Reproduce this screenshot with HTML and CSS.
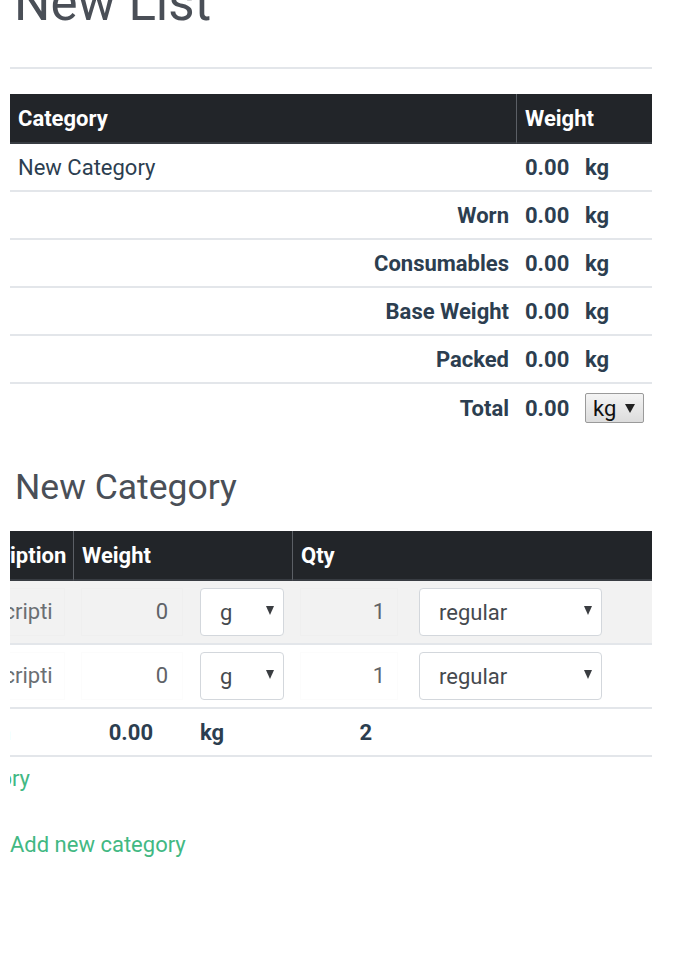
FILE: index.html
```html
<!DOCTYPE html>
<html>
<head>
<meta charset="utf-8">
<link rel="stylesheet" href="styles.css">
</head>
<body>
<div class="page">
  <h1 class="list-title">New List</h1>
  <div class="rule"></div>

  <table class="summary">
    <colgroup><col class="c-label"><col class="c-val"><col class="c-unit"></colgroup>
    <thead>
      <tr><th>Category</th><th class="sep">Weight</th><th class="blank"></th></tr>
    </thead>
    <tbody>
      <tr><td class="cat-name">New Category</td><td class="val">0.00</td><td class="unit">kg</td></tr>
      <tr><td class="label">Worn</td><td class="val">0.00</td><td class="unit">kg</td></tr>
      <tr><td class="label">Consumables</td><td class="val">0.00</td><td class="unit">kg</td></tr>
      <tr><td class="label">Base Weight</td><td class="val">0.00</td><td class="unit">kg</td></tr>
      <tr><td class="label">Packed</td><td class="val">0.00</td><td class="unit">kg</td></tr>
      <tr class="last"><td class="label">Total</td><td class="val">0.00</td><td class="unit"><span class="unit-select">kg<i class="caret-sm"></i></span></td></tr>
    </tbody>
  </table>

  <h2 class="cat-title">New Category</h2>

  <div class="scroller">
    <div class="scroll-inner">
      <table class="items">
        <colgroup>
          <col class="i-desc"><col class="i-w"><col class="i-unit"><col class="i-qty"><col class="i-type"><col class="i-act">
        </colgroup>
        <thead>
          <tr>
            <th>Description</th>
            <th class="sep" colspan="2">Weight</th>
            <th class="sep" colspan="3">Qty</th>
          </tr>
        </thead>
        <tbody>
          <tr class="alt">
            <td><span class="field desc"><span class="clip">Description</span></span></td>
            <td><span class="field num w">0</span></td>
            <td class="unit-cell"><span class="select small">g<i class="caret"></i></span></td>
            <td><span class="field num">1</span></td>
            <td class="type-cell"><span class="select wide">regular<i class="caret"></i></span></td>
            <td></td>
          </tr>
          <tr>
            <td><span class="field desc"><span class="clip">Description</span></span></td>
            <td><span class="field num w">0</span></td>
            <td class="unit-cell"><span class="select small">g<i class="caret"></i></span></td>
            <td><span class="field num">1</span></td>
            <td class="type-cell"><span class="select wide">regular<i class="caret"></i></span></td>
            <td></td>
          </tr>
          <tr class="foot">
            <td><div class="clip-end"><a class="link">Add new item</a></div></td>
            <td class="f-w">0.00</td>
            <td class="f-unit">kg</td>
            <td class="f-qty">2</td>
            <td></td>
            <td></td>
          </tr>
        </tbody>
      </table>
    </div>
    <div class="cat-actions"><a class="link">Delete category</a></div>
  </div>

  <div class="add-row"><a class="link">Add new category</a></div>
</div>
</body>
</html>
```

FILE: styles.css
```css
html, body {
  margin: 0;
  padding: 0;
  background: #fff;
}
body {
  font-family: Roboto, "Liberation Sans", sans-serif;
  color: #2c3e50;
  overflow: hidden;
}
.page {
  margin-left: 10px;
  width: 642px;
}
.list-title {
  margin: -27px 0 0 0;
  padding-left: 4px;
  font-size: 51px;
  line-height: 60px;
  font-weight: 400;
  color: #4a4f57;
}
.rule {
  margin-top: 34px;
  height: 2px;
  background: #e3e6ea;
}
table {
  border-collapse: separate;
  border-spacing: 0;
  table-layout: fixed;
}
th, td {
  box-sizing: border-box;
  padding: 0 8px;
  white-space: nowrap;
}
th {
  background: #222529;
  color: #fff;
  font-size: 22px;
  font-weight: 700;
  text-align: left;
  height: 50px;
  border-bottom: 2px solid #383c42;
}
th.sep {
  border-left: 1px solid #5b5f65;
}

/* summary */
.summary {
  width: 642px;
  margin-top: 25px;
}
.c-label { width: 506px; }
.c-val { width: 60px; }
.c-unit { width: 76px; }
.summary th.sep { padding-left: 8px; }
.summary td {
  height: 48px;
  font-size: 22px;
  border-bottom: 2px solid #e3e6ea;
}
.summary tr.last td { border-bottom: none; }
.summary td.cat-name { font-weight: 400; padding-left: 8px; }
.summary td.label { text-align: right; font-weight: 700; padding-right: 7px; }
.summary td.val { font-weight: 700; padding-left: 9px; padding-right: 0; }
.summary td.unit { font-weight: 700; padding-left: 9px; }
.unit-select {
  display: inline-flex;
  align-items: center;
  justify-content: space-between;
  box-sizing: border-box;
  width: 59px;
  height: 30px;
  padding: 0 8px 0 7px;
  border: 1px solid #9a9a9a;
  border-radius: 2px;
  background: linear-gradient(#f4f4f4, #dcdcdc);
  color: #111;
  font-weight: 400;
  font-size: 22px;
  vertical-align: middle;
}
.caret-sm {
  width: 0;
  height: 0;
  border-left: 5px solid transparent;
  border-right: 5px solid transparent;
  border-top: 9px solid #222;
}

/* category */
.cat-title {
  margin: 34px 0 0 0;
  padding-left: 5px;
  font-size: 35.5px;
  line-height: 43px;
  font-weight: 400;
  color: #4a4f57;
}
.scroller {
  margin-top: 22px;
  width: 642px;
  overflow: hidden;
}
.scroll-inner {
  margin-left: -65px;
  width: 767px;
}
.items { width: 767px; }
.i-desc { width: 128px; }
.i-w { width: 118px; }
.i-unit { width: 101px; }
.i-qty { width: 114px; }
.i-type { width: 246px; }
.i-act { width: 60px; }
.items td {
  height: 64px;
  font-size: 22px;
  border-bottom: 2px solid #e3e6ea;
  padding: 0 8px;
  overflow: hidden;
}
.items tr.alt td { background: #f2f2f2; }
.field {
  display: block;
  box-sizing: border-box;
  height: 48px;
  line-height: 46px;
  border: 1px solid rgba(0, 0, 0, 0.012);
  padding: 0 12px;
  overflow: hidden;
  white-space: nowrap;
  color: #5f6368;
}
.field.desc { color: #6b6f73; }
.clip {
  display: block;
  overflow: hidden;
}
.field.num { text-align: right; }
.field.w { padding-right: 14px; }
.items td.unit-cell { padding-left: 9px; }
.items td.type-cell { padding-left: 13px; }
.select {
  display: flex;
  align-items: center;
  justify-content: space-between;
  box-sizing: border-box;
  height: 48px;
  padding: 0 9px 0 19px;
  border: 1px solid #d3d7dc;
  border-radius: 4px;
  background: #fff;
  color: #45494e;
  font-size: 22px;
}
.select.small { width: 84px; }
.select.wide { width: 183px; }
.caret {
  width: 0;
  height: 0;
  border-left: 4.5px solid transparent;
  border-right: 4.5px solid transparent;
  border-top: 9px solid #3a3d41;
  margin-bottom: 4px;
}
.items tr.foot td {
  height: 48px;
  font-weight: 700;
}
.clip-end {
  display: flex;
  justify-content: flex-end;
  padding-right: 54px;
  font-weight: 400;
}
.items td.f-w { text-align: right; padding-right: 38px; }
.items td.f-unit { padding-left: 9px; }
.items td.f-qty { text-align: right; padding-right: 34px; }

.link {
  color: #42b883;
  text-decoration: none;
  font-size: 22px;
  white-space: nowrap;
}
.cat-actions {
  display: flex;
  justify-content: flex-end;
  width: 20px;
  margin-top: 9px;
  line-height: 26px;
}
.add-row {
  margin-top: 40px;
  line-height: 26px;
}
```
